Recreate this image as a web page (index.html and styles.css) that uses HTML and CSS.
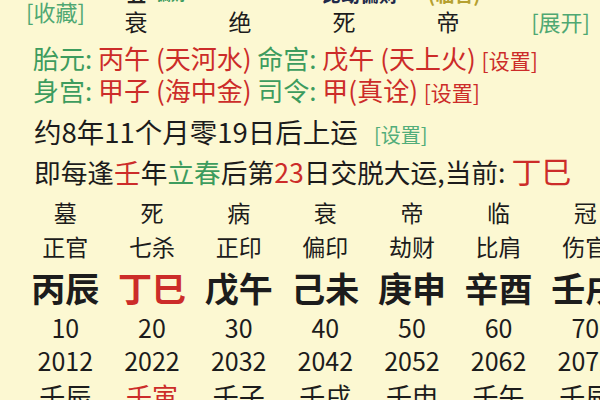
FILE: index.html
```html
<!DOCTYPE html>
<html lang="zh-CN">
<head>
<meta charset="utf-8">
<title>大运</title>
<link rel="stylesheet" href="styles.css">
</head>
<body>
<div class="page">
  <div class="head">
    <div class="fav">[收藏]</div>
    <div class="strip">
      <div class="strip-inner">
        <span class="s1">丑</span><span class="s2">偏财</span><span class="s3">比劫偏财</span><span class="s4">(临官)</span>
      </div>
    </div>
    <div class="ph">衰</div>
    <div class="ph">绝</div>
    <div class="ph">死</div>
    <div class="ph">帝</div>
    <div class="expand">[展开]</div>
  </div>

  <div class="line l1"><span class="g">胎元:</span> <span class="r">丙午 (天河水)</span> <span class="g">命宫:</span> <span class="r">戊午 (天上火)</span> <span class="set r">[设置]</span></div>
  <div class="line l2"><span class="g">身宫:</span> <span class="r">甲子 (海中金)</span> <span class="g">司令:</span> <span class="r">甲(真诠)</span> <span class="set r">[设置]</span></div>
  <div class="line l3">约8年11个月零19日后上运 <span class="set lg">[设置]</span></div>
  <div class="line l4">即每逢<span class="r">壬</span>年<span class="g">立春</span>后第<span class="r">23</span>日交脱大运,当前: <span class="cur r">丁巳</span></div>

  <div class="table">
    <div class="c st">墓</div><div class="c st">死</div><div class="c st">病</div><div class="c st">衰</div><div class="c st">帝</div><div class="c st">临</div><div class="c st">冠</div>
    <div class="c god">正官</div><div class="c god">七杀</div><div class="c god">正印</div><div class="c god">偏印</div><div class="c god">劫财</div><div class="c god">比肩</div><div class="c god">伤官</div>
    <div class="c gz">丙辰</div><div class="c gz r">丁巳</div><div class="c gz">戊午</div><div class="c gz">己未</div><div class="c gz">庚申</div><div class="c gz">辛酉</div><div class="c gz">壬戌</div>
    <div class="c num">10</div><div class="c num">20</div><div class="c num">30</div><div class="c num">40</div><div class="c num">50</div><div class="c num">60</div><div class="c num">70</div>
    <div class="c num">2012</div><div class="c num">2022</div><div class="c num">2032</div><div class="c num">2042</div><div class="c num">2052</div><div class="c num">2062</div><div class="c num">2072</div>
    <div class="c small">壬辰</div><div class="c small r">壬寅</div><div class="c small">壬子</div><div class="c small">壬戌</div><div class="c small">壬申</div><div class="c small">壬午</div><div class="c small">壬辰</div>
  </div>
</div>
</body>
</html>
```

FILE: styles.css
```css
html, body {
  margin: 0;
  padding: 0;
  width: 600px;
  height: 400px;
  overflow: hidden;
  background: #fcf8d2;
}

.page {
  font-family: "Noto Sans CJK SC", "Noto Sans", sans-serif;
  color: #1c1c1c;
  width: 600px;
  height: 400px;
  overflow: hidden;
}

.g { color: #3d9c5e; }
.r { color: #cc2c29; }
.lg { color: #52ad7a; }

.head {
  display: grid;
  grid-template-columns: 84px repeat(4, 104px) 1fr;
  grid-template-rows: 7px 31px;
}

.fav {
  grid-column: 1;
  grid-row: 1 / 3;
  align-self: start;
  padding-left: 26px;
  font-size: 22px;
  line-height: 22px;
  white-space: nowrap;
  color: #4fa872;
}

.strip {
  grid-column: 2 / 7;
  grid-row: 1;
  overflow: hidden;
}

.strip-inner {
  display: flex;
  margin-top: -16px;
  line-height: 20px;
  font-size: 19px;
  white-space: nowrap;
}

.s1 { margin-left: 43px; font-weight: 700; color: #222; }
.s2 { margin-left: 10px; color: #3d9c5e; font-weight: 700; font-size: 15px; }
.s3 { margin-left: 136px; color: #1f2a4a; font-weight: 700; }
.s4 { margin-left: 30px; color: #b5a030; font-weight: 700; }

.ph {
  grid-row: 2;
  text-align: center;
  font-size: 23px;
  line-height: 29px;
}

.expand {
  grid-row: 2;
  grid-column: 6;
  justify-self: end;
  padding-right: 10px;
  font-size: 22px;
  line-height: 29px;
  white-space: nowrap;
  color: #4fa872;
}

.line {
  height: 32px;
  line-height: 32px;
  padding-left: 33px;
  font-size: 26px;
  white-space: nowrap;
}

.l1 { margin-top: 4px; }
.l3 { margin-top: 9px; padding-left: 34px; font-size: 27.5px; }
.l4 { margin-top: 7px; padding-left: 34px; font-size: 26.7px; }

.set { font-size: 21px; }
.l3 .set { font-size: 20px; margin-left: 10px; }

.cur { font-size: 30px; }

.table {
  display: grid;
  grid-template-columns: repeat(7, 86.67px);
  grid-template-rows: 34px 34px 48px 32px 34px 36px;
  padding-left: 22px;
  margin-top: 9px;
  width: 607px;
}

.c {
  display: flex;
  align-items: center;
  justify-content: center;
  white-space: nowrap;
}

.st { font-size: 23px; }
.god { font-size: 23px; }
.gz { font-size: 34px; font-weight: 700; }
.num { font-size: 25px; }
.small { font-size: 26px; }
```
